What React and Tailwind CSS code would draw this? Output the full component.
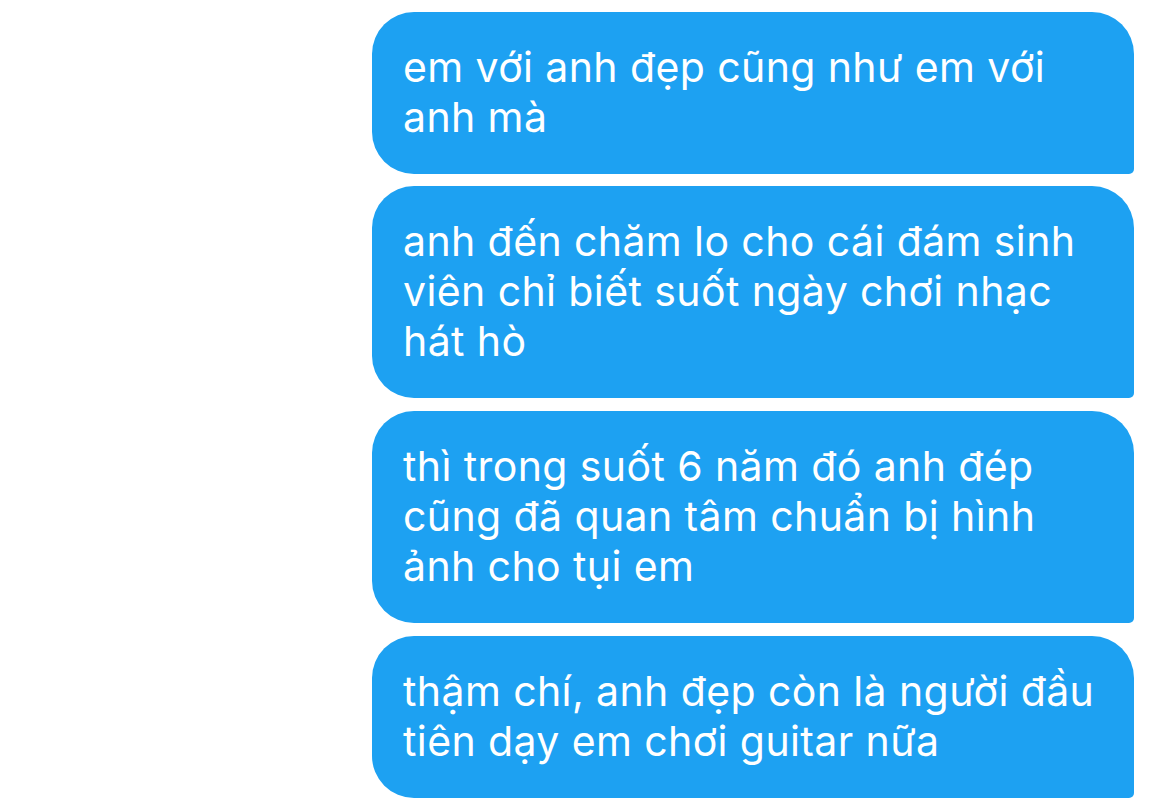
export default function App() {
  const messages = [
    ["em với anh đẹp cũng như em với", "anh mà"],
    ["anh đến chăm lo cho cái đám sinh", "viên chỉ biết suốt ngày chơi nhạc", "hát hò"],
    ["thì trong suốt 6 năm đó anh đép", "cũng đã quan tâm chuẩn bị hình", "ảnh cho tụi em"],
    ["thậm chí, anh đẹp còn là người đầu", "tiên dạy em chơi guitar nữa"],
  ];
  return (
    <div className="w-[1170px] h-[805px] bg-white overflow-hidden">
      <div className="flex flex-col gap-[13px] pt-[12px] pl-[372px]">
        {messages.map((lines, i) => (
          <div
            key={i}
            className={
              "w-[762px] bg-[#1da1f2] text-white rounded-tl-[42px] rounded-tr-[42px] rounded-bl-[42px] rounded-br-[5px] pl-[31px] pr-[20px] pt-[30px] pb-[32px] text-[41px] leading-[50px] tracking-[0.4px] whitespace-nowrap" +
              (i === 1 ? " -mt-[1px]" : "")
            }
            style={{ fontFamily: "Inter, 'Noto Sans', sans-serif" }}
          >
            {lines.map((l, j) => (
              <div key={j}>{l}</div>
            ))}
          </div>
        ))}
      </div>
    </div>
  );
}
